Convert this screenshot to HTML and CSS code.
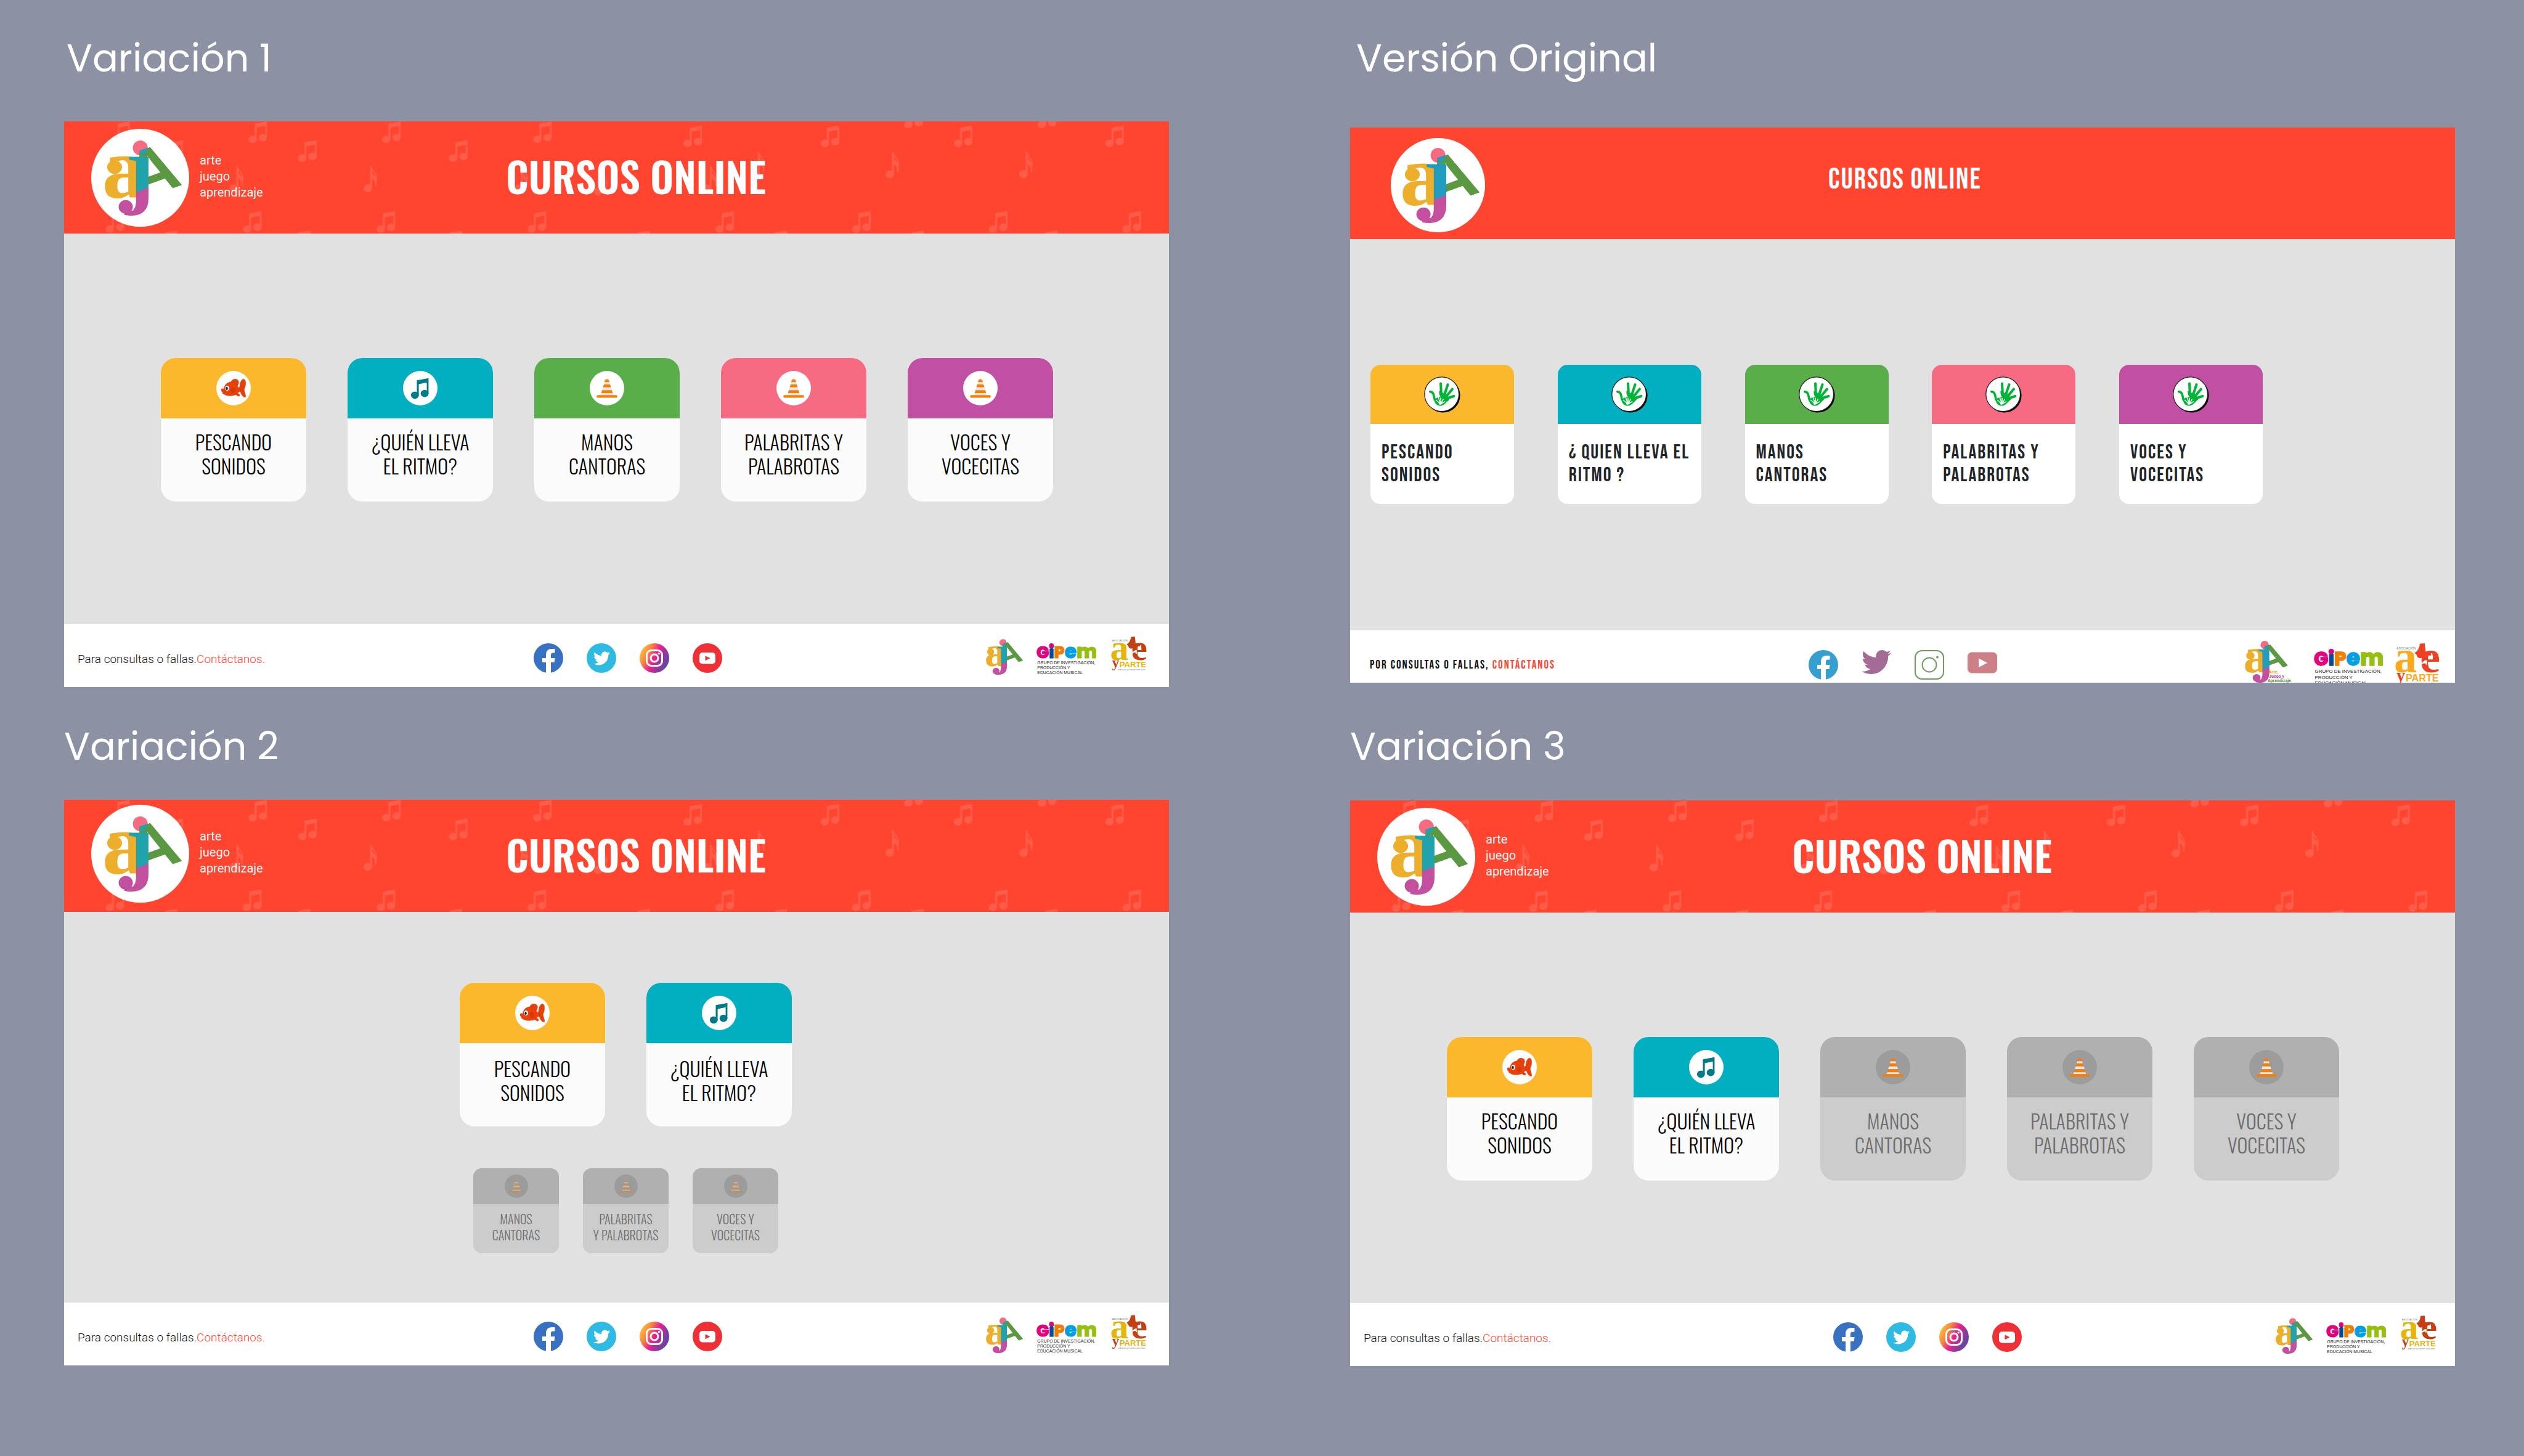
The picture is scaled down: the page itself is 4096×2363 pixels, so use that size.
FILE: index.html
```html
<!DOCTYPE html>
<html lang="es">
<head>
<meta charset="utf-8">
<title>Cursos online – variaciones</title>
<meta name="viewport" content="width=device-width, initial-scale=1">
<link rel="stylesheet" href="styles.css">
</head>
<body>

<!-- Shared drawings -->
<svg class="sprite" aria-hidden="true" width="0" height="0">
  <defs>
    <linearGradient id="ig-fill" x1="0" y1="0.25" x2="1" y2="0.75">
      <stop offset="0.05" stop-color="#fbb93e"/>
      <stop offset="0.25" stop-color="#f98a3c"/>
      <stop offset="0.5" stop-color="#ea1f8f"/>
      <stop offset="0.8" stop-color="#7b3f9f"/>
      <stop offset="1" stop-color="#5b45a0"/>
    </linearGradient>
    <linearGradient id="stem" gradientUnits="userSpaceOnUse" x1="330" y1="386" x2="334" y2="396">
      <stop offset="0.45" stop-color="#20a3ac"/><stop offset="0.5" stop-color="#c2509e"/>
    </linearGradient>
    <linearGradient id="stem-original" gradientUnits="userSpaceOnUse" x1="330" y1="386" x2="334" y2="396">
      <stop offset="0.45" stop-color="#1f9cc0"/><stop offset="0.5" stop-color="#c2509e"/>
    </linearGradient>
    <clipPath id="apex-clip"><path d="M316 157L375 137L420 230H316Z"/></clipPath>
  </defs>

  <symbol id="mark" viewBox="110 98 470 445">
    <text class="mark-serif" x="94" y="433" fill="#edae2c">a</text>
    <ellipse cx="168" cy="256" rx="44" ry="40" fill="#edae2c"/>
    <circle cx="320" cy="142" r="44" fill="#f66b81"/>
    <text class="mark-sans" x="0" y="0" text-anchor="middle" fill="#5a9942" transform="translate(441 407) rotate(-20)">A</text>
    <circle class="mark-blend" cx="320" cy="142" r="44" clip-path="url(#apex-clip)"/>
    <text class="mark-serif mark-stem" x="230" y="433" fill="url(#stem)">ȷ</text>
    <ellipse cx="234" cy="491" rx="42" ry="40" fill="#c2509e"/>
  </symbol>

  <symbol id="beamed" viewBox="0 0 37 43">
    <path d="M12.500 4.500L37 0V33H33.200V9L16.500 12.500V36H12.500Z"/>
    <ellipse cx="8.300" cy="35.500" rx="8.300" ry="7.500"/>
    <ellipse cx="28.700" cy="32" rx="8.300" ry="7.500"/>
  </symbol>
  <symbol id="single" viewBox="0 0 28 53">
    <path d="M13 0H16C17 9 28 14 27 26C27 29 26 31 25.500 33C27 37 26 40 24 40.500L22.500 39C25 34 21 27 17 25V45H13ZM17 9V13C19 17 22 19 24.500 22C24 17 20 13 17 9Z" fill-rule="evenodd"/>
    <ellipse cx="8.500" cy="44.500" rx="8.500" ry="8"/>
  </symbol>

  <symbol id="notes" viewBox="0 0 2182 222">
    <g fill="#fff" opacity="0.13">
      <use href="#beamed" x="93" y="0" width="37" height="43"/><use href="#beamed" x="198" y="37" width="37" height="43"/>
      <use href="#beamed" x="364" y="0" width="37" height="43"/><use href="#beamed" x="462" y="37" width="37" height="43"/>
      <use href="#beamed" x="628" y="0" width="37" height="43"/><use href="#beamed" x="760" y="37" width="37" height="43"/>
      <use href="#beamed" x="926" y="0" width="37" height="43"/><use href="#beamed" x="1223" y="8" width="37" height="43"/>
      <use href="#beamed" x="1494" y="8" width="37" height="43"/><use href="#beamed" x="1757" y="8" width="37" height="43"/>
      <use href="#beamed" x="2056" y="8" width="37" height="43"/><use href="#beamed" x="1659" y="-29" width="37" height="43"/>
      <use href="#beamed" x="1923" y="-29" width="37" height="43"/>
      <use href="#beamed" x="82" y="177" width="37" height="43"/><use href="#beamed" x="353" y="177" width="37" height="43"/>
      <use href="#beamed" x="617" y="177" width="37" height="43"/><use href="#beamed" x="915" y="177" width="37" height="43"/>
      <use href="#beamed" x="1286" y="177" width="37" height="43"/><use href="#beamed" x="1556" y="177" width="37" height="43"/>
      <use href="#beamed" x="1826" y="177" width="37" height="43"/><use href="#beamed" x="2090" y="177" width="37" height="43"/>
      <use href="#beamed" x="187" y="215" width="37" height="43"/><use href="#beamed" x="450" y="215" width="37" height="43"/>
      <use href="#beamed" x="749" y="215" width="37" height="43"/><use href="#beamed" x="1120" y="215" width="37" height="43"/>
      <use href="#beamed" x="1391" y="215" width="37" height="43"/><use href="#beamed" x="1661" y="215" width="37" height="43"/>
      <use href="#beamed" x="1925" y="215" width="37" height="43"/>
      <use href="#single" x="327" y="88" width="28" height="53"/><use href="#single" x="591" y="88" width="28" height="53"/>
      <use href="#single" x="889" y="88" width="28" height="53"/><use href="#single" x="1046" y="94" width="28" height="53"/>
      <use href="#single" x="1262" y="88" width="28" height="53"/><use href="#single" x="1357" y="60" width="28" height="53"/>
      <use href="#single" x="1622" y="60" width="28" height="53"/><use href="#single" x="1886" y="60" width="28" height="53"/>
    </g>
  </symbol>

  <symbol id="fish" viewBox="-10 -16 68 68">
    <g fill="#e8410c" stroke="#c93a0c" stroke-width="0.600">
      <path d="M19 6C20 1 26-1 31 1C35 3 35 8 32 13L30 16Z"/>
      <path d="M36 18C36 8 39 0 44 0C49 1 49 12 45 20C45 25 48 30 48 35C44 38 38 30 37 23Z"/>
      <path d="M28 29C33 27 37 30 36 33C33 35 29 32 28 29Z"/>
      <path d="M0 20C1 18 4 19 5 20C6 12 11 6 19 6C27 5 31 14 34 17L38 15V24L34 26C31 31 24 33 17 33C10 33 6 31 5 29C3 30 2 28 3 26C1 26-1 22 0 20Z"/>
      <path d="M21 18C25 16 28 20 26 24C26 28 21 28 20 25C18 23 19 19 21 18Z" fill="#d83a0a"/>
      <path d="M40 14L42 5M42 24L45 32M26 5L29 9" fill="none"/>
    </g>
    <ellipse cx="11.500" cy="18" rx="3.800" ry="4.800" fill="#fff"/>
    <ellipse cx="10.800" cy="18.500" rx="1.900" ry="3.200" fill="#1d1d1b"/>
  </symbol>

  <symbol id="note-icon" viewBox="-15 -14 67 67">
    <use href="#beamed" x="0" y="0" width="35" height="40" fill="#007a84"/>
  </symbol>

  <symbol id="cone" viewBox="-13.500 -16 67 67">
    <path d="M16.500 1.500Q20 -1.500 23.500 1.500L25 6H15Z" fill="#f57f0a"/>
    <path d="M15 6H25L26 10H14Z" fill="#e8e8e8"/>
    <path d="M14 10H26L27.800 16H12.200Z" fill="#f57f0a"/>
    <path d="M12.200 16H27.800L29.500 21.500H10.500Z" fill="#e8e8e8"/>
    <path d="M10.500 21.500H29.500L31.300 27.500H8.700Z" fill="#f57f0a"/>
    <path d="M8.700 27.500H31.300L32.500 31H7.500Z" fill="#e8e8e8"/>
    <rect x="0" y="31" width="40" height="5" rx="2" fill="#f57f0a"/>
  </symbol>

  <symbol id="hand" viewBox="0 0 72 72">
    <circle cx="37.500" cy="37.500" r="34" fill="#000"/>
    <circle cx="35" cy="35" r="34" fill="#fff" stroke="#222" stroke-width="1.500"/>
    <g fill="none" stroke="#00b436" stroke-linecap="round" stroke-linejoin="round">
      <path d="M33 14L34 34" stroke-width="5"/>
      <path d="M47 16L40 37" stroke-width="5"/>
      <path d="M56 25L42 42" stroke-width="5"/>
      <path d="M59 39L43 44" stroke-width="5"/>
      <path d="M12 30C20 31 19 38 21 46" stroke-width="4.500"/>
    </g>
    <path d="M19 38C20 50 22 56 30 58C40 59 43 51 50 46C48 38 44 34 36 32L30 28C29 34 31 38 33 41C28 40 24 42 22 45Z" fill="#00b436"/>
    <path d="M31 53L24 47M32 52L28 41M33 52L33 43M34 53L38 45M34 54L41 50" stroke="#fff" stroke-width="1.800" stroke-linecap="round"/>
    <circle cx="32" cy="53" r="3" fill="#fff"/>
  </symbol>

  <symbol id="bird" viewBox="0 0 512 512">
    <path d="M459.370 151.716c.325 4.548.325 9.097.325 13.645 0 138.720-105.583 298.558-298.558 298.558-59.452 0-114.680-17.219-161.137-47.106 8.447.974 16.568 1.299 25.340 1.299 49.055 0 94.213-16.568 130.274-44.832-46.132-.975-84.792-31.188-98.112-72.772 6.498.974 12.995 1.624 19.818 1.624 9.421 0 18.843-1.300 27.614-3.573-48.081-9.747-84.143-51.980-84.143-102.985v-1.299c13.969 7.797 30.214 12.670 47.431 13.319-28.264-18.843-46.781-51.005-46.781-87.391 0-19.492 5.197-37.360 14.294-52.954 51.655 63.675 129.300 105.258 216.365 109.807-1.624-7.797-2.599-15.918-2.599-24.040 0-57.828 46.782-104.934 104.934-104.934 30.213 0 57.502 12.670 76.670 33.137 23.715-4.548 46.456-13.320 66.599-25.340-7.798 24.366-24.366 44.833-46.132 57.827 21.117-2.273 41.584-8.122 60.426-16.243-14.292 20.791-32.161 39.308-52.628 54.253z"/>
  </symbol>

  <symbol id="fb" viewBox="0 0 48 48">
    <circle cx="24" cy="24" r="24" fill="#3871c1"/>
    <path d="M20 48V31H14V24H20V19C20 12.500 23.500 9 29.500 9H34.500V15.500H31.500C29 15.500 28 16.700 28 19V24H34.600L33.500 31H28V48Z" fill="#fff"/>
  </symbol>
  <symbol id="tw" viewBox="0 0 48 48">
    <circle cx="24" cy="24" r="24" fill="#2fbae3"/>
    <use href="#bird" x="11" y="11" width="27" height="27" fill="#fff"/>
  </symbol>
  <symbol id="ig" viewBox="0 0 48 48">
    <circle cx="24" cy="24" r="24" fill="url(#ig-fill)"/>
    <rect x="11.500" y="11.500" width="25" height="25" rx="7.500" fill="none" stroke="#fff" stroke-width="3"/>
    <circle cx="24" cy="24" r="6" fill="none" stroke="#fff" stroke-width="3"/>
    <circle cx="31.300" cy="16.800" r="1.700" fill="#fff"/>
  </symbol>
  <symbol id="yt" viewBox="0 0 48 48">
    <circle cx="24" cy="24" r="24" fill="#ef2f36"/>
    <rect x="11" y="15" width="26" height="18.500" rx="5" fill="#fff"/>
    <path d="M20.500 20.300V28.200L28.500 24.200Z" fill="#ef2f36"/>
  </symbol>

  <symbol id="fb-flat" viewBox="0 0 48 48">
    <circle cx="24" cy="24" r="24" fill="#359fcf"/>
    <path d="M20 48V31H14V24H20V19C20 12.500 23.500 9 29.500 9H34.500V15.500H31.500C29 15.500 28 16.700 28 19V24H34.600L33.500 31H28V48Z" fill="#fff"/>
  </symbol>
  <symbol id="tw-flat" viewBox="0 48 512 512"><use href="#bird" x="0" y="0" width="512" height="512" fill="#a36b95"/></symbol>
  <symbol id="ig-flat" viewBox="0 0 48 48">
    <rect x="1" y="1" width="46" height="46" rx="11" fill="none" stroke="#6c9d5c" stroke-width="2"/>
    <circle cx="24" cy="24" r="11.500" fill="none" stroke="#6c9d5c" stroke-width="2"/>
    <circle cx="37" cy="11.500" r="2" fill="#6c9d5c"/>
  </symbol>
  <symbol id="yt-flat" viewBox="0 0 48 48">
    <rect x="0" y="3.500" width="48" height="34" rx="7" fill="#cd8086"/>
    <path d="M18 13.500V28L32 20.700Z" fill="#fff"/>
  </symbol>

  <symbol id="gipem" viewBox="0 0 354 204">
    <text class="gipem-word" x="0" y="104"><tspan fill="#e5007e" stroke="#e5007e">G</tspan><tspan fill="#004a99" stroke="#004a99">i</tspan><tspan fill="#f07f00" stroke="#f07f00">P</tspan><tspan class="gipem-big" fill="#009ee3" stroke="#009ee3">e</tspan><tspan class="gipem-big" fill="#97c00e" stroke="#97c00e">m</tspan></text>
    <circle cx="89" cy="32" r="14" fill="#e5007e"/>
    <g class="gipem-tag">
      <text x="5" y="143">GRUPO DE INVESTIGACIÓN,</text>
      <text x="5" y="172">PRODUCCIÓN Y</text>
      <text x="5" y="201">EDUCACIÓN MUSICAL</text>
    </g>
  </symbol>

  <symbol id="arte" viewBox="0 0 216 204">
    <text class="arte-small" x="6" y="30">ASOCIACIÓN</text>
    <text class="arte-serif arte-yellow" x="-6" y="140">a</text>
    <path class="arte-red" d="M118 2L142 0L146 40L172 42V58L148 60C142 66 130 70 118 72L106 66L102 54L92 46C106 40 116 24 118 2Z"/>
    <text class="arte-serif arte-red" x="118" y="140">e</text>
    <text class="arte-r" x="98" y="142">r</text>
    <text class="arte-y arte-red" x="6" y="184">y</text>
    <text class="arte-word arte-yellow" x="50" y="184">PARTE</text>
    <text class="arte-small" x="42" y="200">educar y crecer con arte</text>
  </symbol>
</svg>

<main class="board">

  <div class="column">
    <section class="variant">
      <h2 class="variant-title title-a">Variación 1</h2>
      <div class="panel">
        <header class="top">
          <svg class="pattern" viewBox="0 0 2182 222" preserveAspectRatio="xMinYMin slice" aria-hidden="true"><use href="#notes" width="2182" height="222"/></svg>
          <div class="brand">
            <span class="logo"><svg class="logo-mark" role="img" aria-label="AJA"><use href="#mark"/></svg></span>
            <p class="brand-text">arte<br>juego<br>aprendizaje</p>
          </div>
          <h1 class="heading">CURSOS ONLINE</h1>
        </header>
        <ul class="courses">
          <li><a class="card yellow" href="#pescando"><span class="card-top"><svg class="badge"><use href="#fish"/></svg></span><span class="label">PESCANDO<br>SONIDOS</span></a></li>
          <li><a class="card teal" href="#ritmo"><span class="card-top"><svg class="badge"><use href="#note-icon"/></svg></span><span class="label">¿QUIÉN LLEVA<br>EL RITMO?</span></a></li>
          <li><a class="card green" href="#manos"><span class="card-top"><svg class="badge"><use href="#cone"/></svg></span><span class="label">MANOS<br>CANTORAS</span></a></li>
          <li><a class="card pink" href="#palabritas"><span class="card-top"><svg class="badge"><use href="#cone"/></svg></span><span class="label">PALABRITAS Y<br>PALABROTAS</span></a></li>
          <li><a class="card purple" href="#voces"><span class="card-top"><svg class="badge"><use href="#cone"/></svg></span><span class="label">VOCES Y<br>VOCECITAS</span></a></li>
        </ul>
        <footer class="bottom">
          <p class="contact">Para consultas o fallas.<a href="#contacto">Contáctanos.</a></p>
          <nav class="social" aria-label="Redes sociales">
            <a href="#facebook" aria-label="Facebook"><svg class="icon"><use href="#fb"/></svg></a>
            <a href="#twitter" aria-label="Twitter"><svg class="icon"><use href="#tw"/></svg></a>
            <a href="#instagram" aria-label="Instagram"><svg class="icon"><use href="#ig"/></svg></a>
            <a href="#youtube" aria-label="YouTube"><svg class="icon"><use href="#yt"/></svg></a>
          </nav>
          <div class="partners">
            <svg class="p-mark"><use href="#mark"/></svg>
            <svg class="p-gipem"><use href="#gipem"/></svg>
            <svg class="p-arte"><use href="#arte"/></svg>
          </div>
        </footer>
      </div>
    </section>

    <section class="variant">
      <h2 class="variant-title title-b">Variación 2</h2>
      <div class="panel stacked">
        <header class="top">
          <svg class="pattern" viewBox="0 0 2182 222" preserveAspectRatio="xMinYMin slice" aria-hidden="true"><use href="#notes" width="2182" height="222"/></svg>
          <div class="brand">
            <span class="logo"><svg class="logo-mark" role="img" aria-label="AJA"><use href="#mark"/></svg></span>
            <p class="brand-text">arte<br>juego<br>aprendizaje</p>
          </div>
          <h1 class="heading">CURSOS ONLINE</h1>
        </header>
        <div class="stack">
          <ul class="row">
            <li><a class="card yellow" href="#pescando"><span class="card-top"><svg class="badge"><use href="#fish"/></svg></span><span class="label">PESCANDO<br>SONIDOS</span></a></li>
            <li><a class="card teal" href="#ritmo"><span class="card-top"><svg class="badge"><use href="#note-icon"/></svg></span><span class="label">¿QUIÉN LLEVA<br>EL RITMO?</span></a></li>
          </ul>
          <ul class="row row-small">
            <li><button class="card locked small" type="button" disabled><span class="card-top"><svg class="badge"><use href="#cone"/></svg></span><span class="label">MANOS<br>CANTORAS</span></button></li>
            <li><button class="card locked small" type="button" disabled><span class="card-top"><svg class="badge"><use href="#cone"/></svg></span><span class="label">PALABRITAS<br>Y PALABROTAS</span></button></li>
            <li><button class="card locked small" type="button" disabled><span class="card-top"><svg class="badge"><use href="#cone"/></svg></span><span class="label">VOCES Y<br>VOCECITAS</span></button></li>
          </ul>
        </div>
        <footer class="bottom">
          <p class="contact">Para consultas o fallas.<a href="#contacto">Contáctanos.</a></p>
          <nav class="social" aria-label="Redes sociales">
            <a href="#facebook" aria-label="Facebook"><svg class="icon"><use href="#fb"/></svg></a>
            <a href="#twitter" aria-label="Twitter"><svg class="icon"><use href="#tw"/></svg></a>
            <a href="#instagram" aria-label="Instagram"><svg class="icon"><use href="#ig"/></svg></a>
            <a href="#youtube" aria-label="YouTube"><svg class="icon"><use href="#yt"/></svg></a>
          </nav>
          <div class="partners">
            <svg class="p-mark"><use href="#mark"/></svg>
            <svg class="p-gipem"><use href="#gipem"/></svg>
            <svg class="p-arte"><use href="#arte"/></svg>
          </div>
        </footer>
      </div>
    </section>
  </div>

  <div class="column">
    <section class="variant">
      <h2 class="variant-title title-c">Versión Original</h2>
      <div class="panel original">
        <header class="top">
          <div class="brand">
            <span class="logo"><svg class="logo-mark" role="img" aria-label="AJA"><use href="#mark"/></svg></span>
          </div>
          <h1 class="heading">CURSOS ONLINE</h1>
        </header>
        <ul class="courses">
          <li><a class="card yellow" href="#pescando"><span class="card-top"><svg class="badge"><use href="#hand"/></svg></span><span class="label">PESCANDO<br>SONIDOS</span></a></li>
          <li><a class="card teal" href="#ritmo"><span class="card-top"><svg class="badge"><use href="#hand"/></svg></span><span class="label">¿ QUIEN LLEVA EL<br>RITMO ?</span></a></li>
          <li><a class="card green" href="#manos"><span class="card-top"><svg class="badge"><use href="#hand"/></svg></span><span class="label">MANOS<br>CANTORAS</span></a></li>
          <li><a class="card pink" href="#palabritas"><span class="card-top"><svg class="badge"><use href="#hand"/></svg></span><span class="label">PALABRITAS Y<br>PALABROTAS</span></a></li>
          <li><a class="card purple" href="#voces"><span class="card-top"><svg class="badge"><use href="#hand"/></svg></span><span class="label">VOCES Y<br>VOCECITAS</span></a></li>
        </ul>
        <footer class="bottom">
          <p class="contact">POR CONSULTAS O FALLAS, <a href="#contacto">CONTÁCTANOS</a></p>
          <nav class="social" aria-label="Redes sociales">
            <a href="#facebook" aria-label="Facebook"><svg class="icon"><use href="#fb-flat"/></svg></a>
            <a href="#twitter" aria-label="Twitter"><svg class="icon"><use href="#tw-flat"/></svg></a>
            <a href="#instagram" aria-label="Instagram"><svg class="icon"><use href="#ig-flat"/></svg></a>
            <a href="#youtube" aria-label="YouTube"><svg class="icon"><use href="#yt-flat"/></svg></a>
          </nav>
          <div class="partners">
            <svg class="p-mark" viewBox="0 0 72 68">
              <use href="#mark" width="72" height="68"/>
              <text class="tag tag-arte" x="39" y="53">Arte,</text>
              <text class="tag tag-juego" x="39" y="60">Juego y</text>
              <text class="tag tag-apr" x="37" y="67">Aprendizaje</text>
            </svg>
            <svg class="p-gipem"><use href="#gipem"/></svg>
            <svg class="p-arte"><use href="#arte"/></svg>
          </div>
        </footer>
      </div>
    </section>

    <section class="variant">
      <h2 class="variant-title title-d">Variación 3</h2>
      <div class="panel shifted">
        <header class="top">
          <svg class="pattern" viewBox="0 0 2182 222" preserveAspectRatio="xMinYMin slice" aria-hidden="true"><use href="#notes" width="2182" height="222"/></svg>
          <div class="brand">
            <span class="logo"><svg class="logo-mark" role="img" aria-label="AJA"><use href="#mark"/></svg></span>
            <p class="brand-text">arte<br>juego<br>aprendizaje</p>
          </div>
          <h1 class="heading">CURSOS ONLINE</h1>
        </header>
        <ul class="courses">
          <li><a class="card yellow" href="#pescando"><span class="card-top"><svg class="badge"><use href="#fish"/></svg></span><span class="label">PESCANDO<br>SONIDOS</span></a></li>
          <li><a class="card teal" href="#ritmo"><span class="card-top"><svg class="badge"><use href="#note-icon"/></svg></span><span class="label">¿QUIÉN LLEVA<br>EL RITMO?</span></a></li>
          <li><button class="card locked" type="button" disabled><span class="card-top"><svg class="badge"><use href="#cone"/></svg></span><span class="label">MANOS<br>CANTORAS</span></button></li>
          <li><button class="card locked" type="button" disabled><span class="card-top"><svg class="badge"><use href="#cone"/></svg></span><span class="label">PALABRITAS Y<br>PALABROTAS</span></button></li>
          <li><button class="card locked" type="button" disabled><span class="card-top"><svg class="badge"><use href="#cone"/></svg></span><span class="label">VOCES Y<br>VOCECITAS</span></button></li>
        </ul>
        <footer class="bottom">
          <p class="contact">Para consultas o fallas.<a href="#contacto">Contáctanos.</a></p>
          <nav class="social" aria-label="Redes sociales">
            <a href="#facebook" aria-label="Facebook"><svg class="icon"><use href="#fb"/></svg></a>
            <a href="#twitter" aria-label="Twitter"><svg class="icon"><use href="#tw"/></svg></a>
            <a href="#instagram" aria-label="Instagram"><svg class="icon"><use href="#ig"/></svg></a>
            <a href="#youtube" aria-label="YouTube"><svg class="icon"><use href="#yt"/></svg></a>
          </nav>
          <div class="partners">
            <svg class="p-mark"><use href="#mark"/></svg>
            <svg class="p-gipem"><use href="#gipem"/></svg>
            <svg class="p-arte"><use href="#arte"/></svg>
          </div>
        </footer>
      </div>
    </section>
  </div>

</main>
</body>
</html>
```
FILE: styles.css
```css
:root {
  --blend: #20a3ac;
  --stem: url(#stem);
  --arte-yellow: #e5b50a;
  --arte-red: #c43f14;
}

* { box-sizing: border-box; }

body {
  margin: 0;
  background: #8c92a4;
  font-family: Roboto, "Liberation Sans", sans-serif;
  color: #111;
}

h1, h2, p, ul { margin: 0; padding: 0; }
ul { list-style: none; }
a { color: inherit; text-decoration: none; }
svg { display: block; overflow: hidden; }
.sprite { position: absolute; }

/* Board */
.board {
  display: grid;
  grid-template-columns: 1fr 1fr;
  column-gap: 294px;
  padding: 55px 112px 0 104px;
}

.variant-title {
  font: 400 62px/80px Poppins, Inter, sans-serif;
  color: #fff;
}
.title-a { padding-left: 4px; margin-bottom: 62px; }
.title-b { margin: 57px 0 46px; }
.title-c { padding-left: 10px; margin-bottom: 72px; }
.title-d { margin: 64px 0 47px; }

.panel { background: #e1e1e1; }

/* Header */
.top {
  position: relative;
  display: grid;
  grid-template-columns: 40% 1fr;
  align-items: center;
  min-height: 182px;
  background: #ff452f;
  color: #fff;
}
.pattern {
  position: absolute;
  inset: 0;
  width: 100%;
  height: 100%;
}
.brand {
  position: relative;
  display: flex;
  align-items: center;
  gap: 17px;
  padding-left: 44px;
}
.logo {
  display: grid;
  place-items: center;
  width: 159px;
  height: 159px;
  border-radius: 50%;
  background: #fff;
}
.logo-mark { width: 129px; height: 122px; margin: 2px 0 0 13px; }
.brand-text { padding-bottom: 4px; font-size: 20px; line-height: 26px; }
.heading {
  position: relative;
  padding-bottom: 6px;
  font: 600 66px/80px Oswald, "Roboto Condensed", sans-serif;
}

.mark-serif { font: 700 520px "Liberation Serif", serif; }
.mark-sans { font: 700 400px "Liberation Sans", sans-serif; }
.mark-blend { fill: var(--blend); }
.mark-stem { fill: var(--stem); }

/* Course cards */
.courses {
  display: flex;
  justify-content: space-between;
  padding: 202px 188px 199px 157px;
}
.stack {
  display: flex;
  flex-direction: column;
  align-items: center;
  gap: 68px;
  padding: 115px 0 80px 30px;
}
.row { display: flex; gap: 67px; }
.row-small { gap: 39px; }

.card {
  display: block;
  width: 236px;
  padding: 0;
  border: 0;
  border-radius: 24px;
  overflow: hidden;
  background: #fbfbfb;
  color: #000;
  font: 300 32px/39px Oswald, "Roboto Condensed", sans-serif;
  text-align: center;
}
.card-top {
  display: grid;
  place-items: center;
  height: 98px;
}
.badge {
  width: 56px;
  height: 56px;
  border-radius: 50%;
  background: #fff;
}
.label { display: block; padding: 18px 0 39px; }
.stacked .label { padding: 21px 0 36px; }

.yellow .card-top { background: #fcb82c; }
.teal .card-top { background: #02afc0; }
.green .card-top { background: #59ae49; }
.pink .card-top { background: #f66b81; }
.purple .card-top { background: #c14fa3; }

.locked { background: #ccc; color: #6c6c6c; }
.locked .card-top { background: #b0b0b0; }
.locked .badge { background: #9c9c9c; }

.small {
  width: 139px;
  border-radius: 14px;
  font-size: 20px;
  line-height: 26px;
}
.small .card-top { height: 58px; }
.small .badge { width: 38px; height: 38px; }
.small .badge use { opacity: 0.4; }
.stacked .small .label { padding: 11px 0 17px; }

/* Footer */
.bottom {
  display: grid;
  grid-template-columns: 762px 1fr auto;
  align-items: start;
  height: 102px;
  overflow: hidden;
  background: #fff;
}
.contact {
  padding: 44px 0 0 22px;
  font-size: 19px;
  font-weight: 300;
  line-height: 26px;
}
.contact a { color: #ff452f; }
.social { display: flex; gap: 38px; padding-top: 31px; }
.icon { width: 48px; height: 48px; }
.partners { display: flex; padding-right: 35px; }
.p-mark { width: 62px; height: 59px; margin: 24px 20px 0 0; }
.p-gipem { width: 97px; height: 56px; margin: 26px 24px 0 0; }
.p-arte { width: 59px; height: 56px; margin-top: 20px; }

.gipem-word { font: 800 98px Poppins, "Open Sans", sans-serif; stroke-width: 4px; stroke-linejoin: round; }
.gipem-big { font-size: 114px; }
.gipem-tag { font: 400 25px "Liberation Sans", sans-serif; fill: #222; }
.arte-small { font: 400 15px "Liberation Sans", sans-serif; fill: #777; }
.arte-serif { font: 700 220px "Liberation Serif", serif; }
.arte-r { font: 700 130px "Liberation Serif", serif; fill: #fff; }
.arte-y { font: 700 84px "Liberation Serif", serif; }
.arte-word { font: 700 48px "Liberation Sans", sans-serif; }
.arte-yellow { fill: var(--arte-yellow); }
.arte-red { fill: var(--arte-red); }

/* Original version */
.original {
  --blend: #1f9cc0;
  --stem: url(#stem-original);
  --arte-yellow: #fba91e;
  --arte-red: #ee4023;
}
.original .top { grid-template-columns: 776px 1fr; min-height: 181px; }
.original .brand { padding: 5px 0 0 66px; }
.original .logo { width: 153px; height: 153px; }
.original .heading {
  padding-bottom: 12px;
  font: 400 48px/60px "Bebas Neue", "Roboto Condensed", sans-serif;
  letter-spacing: 2px;
}
.original .courses { padding: 204px 312px 205px 33px; }
.original .card {
  width: 233px;
  border-radius: 16px;
  background: #fff;
  color: #212529;
  font: 400 32px/37px "Bebas Neue", "Roboto Condensed", sans-serif;
  letter-spacing: 2px;
  text-align: left;
}
.original .card-top { height: 96px; }
.original .badge { width: 59px; height: 59px; background: none; border-radius: 0; }
.original .label { padding: 28px 0 28px 18px; white-space: nowrap; }
.original .bottom { grid-template-columns: 744px 1fr auto; height: 85px; }
.original .contact {
  padding: 44px 0 0 32px;
  font: 400 19px/26px "Bebas Neue", "Roboto Condensed", sans-serif;
  letter-spacing: 2px;
}
.original .social { padding-top: 32px; }
.original .partners { padding-right: 24px; }
.original .p-mark { width: 72px; height: 68px; margin: 17px 40px 0 0; overflow: visible; }
.original .p-gipem { width: 112px; height: 65px; margin: 24px 20px 0 0; }
.original .p-arte { width: 73px; height: 69px; margin-top: 21px; }
.tag { font: 700 8px "Roboto Condensed", sans-serif; }
.tag-arte { fill: #edae2c; }
.tag-juego { fill: #c2509e; }
.tag-apr { fill: #5a9942; }

/* Second variation: brand sits higher in the header */
.stacked .brand { padding-bottom: 8px; }

/* Third variation: social links and logos sit further right */
.shifted .bottom { grid-template-columns: 784px 1fr auto; }
.shifted .partners { padding-right: 29px; }
```
